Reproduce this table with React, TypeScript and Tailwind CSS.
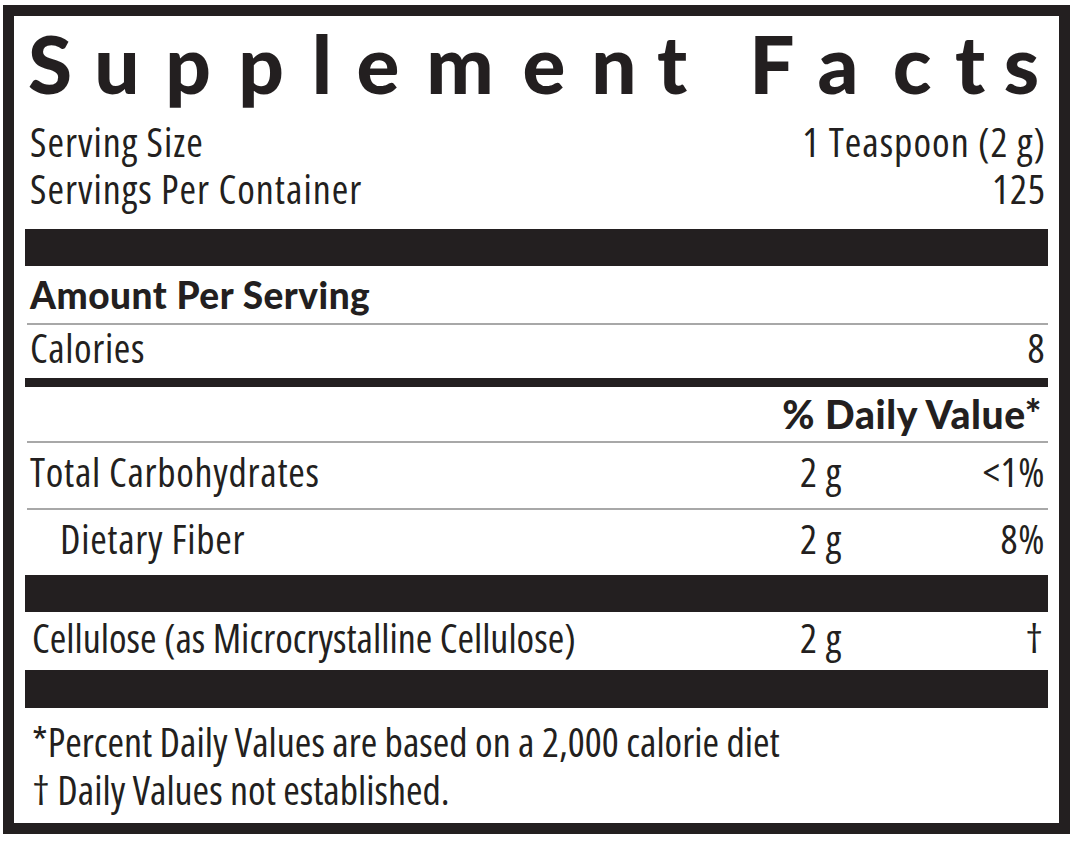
import React from "react";

const body = "font-['Open_Sans',sans-serif] font-stretch-[75%]";
const heavy = "font-['Lato',sans-serif] font-black";

// letter slots for the wide title, each centred on the printed letter
const titleLetters: [string, string][] = [
  ["S", "w-[50px]"],
  ["u", "w-[84px]"],
  ["p", "w-[58px]"],
  ["p", "w-[88px]"],
  ["l", "w-[34px]"],
  ["e", "w-[78px]"],
  ["m", "w-[86px]"],
  ["e", "w-[82px]"],
  ["n", "w-[58px]"],
  ["t", "w-[58px]"],
  [" ", "w-[46px]"],
  ["F", "w-[50px]"],
  ["a", "w-[82px]"],
  ["c", "w-[66px]"],
  ["t", "w-[50px]"],
  ["s", "w-[53px]"],
];

function NutrientRow({ name, amount, dv, indent }: { name: string; amount: string; dv: string; indent?: boolean }) {
  return (
    <div className={`flex items-center h-[65px] pb-[7px] text-[40px] leading-none tracking-[0.7px] ${body}`}>
      <span className={`flex-1 ${indent ? "pl-[35px]" : "pl-[5px]"}`}>{name}</span>
      <span className="w-[145px]">{amount}</span>
      <span className="w-[103px] text-right pr-[3px]">{dv}</span>
    </div>
  );
}

export default function App() {
  return (
    <div className="w-[1080px] h-[842px] bg-white pt-[5px] pl-[3px]">
      <div className="w-[1067px] h-[829px] border-[11px] border-[#231f20] px-[11px] text-[#231f20] flex flex-col">
        {/* Title */}
        <h1 className={`h-[94px] flex text-[80px] leading-[94px] whitespace-pre ${heavy}`}>
          {titleLetters.map(([ch, w], i) => (
            <span key={i} className={`${w} shrink-0 text-center`}>
              {ch}
            </span>
          ))}
        </h1>

        {/* Serving info */}
        <div className={`h-[119px] pt-[8px] text-[40px] leading-none tracking-[1px] ${body}`}>
          <div className="h-[47px] flex items-center justify-between pl-[5px] pr-[2px]">
            <span>Serving Size</span>
            <span>1 Teaspoon (2 g)</span>
          </div>
          <div className="h-[47px] flex items-center justify-between pl-[5px] pr-[2px]">
            <span>Servings Per Container</span>
            <span>125</span>
          </div>
        </div>

        <div className="h-[37px] bg-[#231f20]" />

        <div className={`h-[57px] flex items-center pl-[5px] text-[37px] tracking-[0.5px] ${heavy}`}>Amount Per Serving</div>
        <div className="h-[2px] bg-[#a8a8a8] ml-[2px]" />

        <div className={`h-[53px] flex items-center justify-between pb-[7px] pl-[5px] pr-[3px] text-[40px] leading-none tracking-[0.6px] ${body}`}>
          <span>Calories</span>
          <span>8</span>
        </div>
        <div className="h-[9px] bg-[#231f20]" />

        <div className={`h-[54px] flex items-center justify-end pr-[6px] text-[39px] tracking-[0.6px] ${heavy}`}>% Daily Value*</div>
        <div className="h-[2px] bg-[#a8a8a8] ml-[2px]" />

        <NutrientRow name="Total Carbohydrates" amount="2 g" dv="<1%" />
        <div className="h-[2px] bg-[#a8a8a8] ml-[2px]" />
        <NutrientRow name="Dietary Fiber" amount="2 g" dv="8%" indent />

        <div className="h-[37px] bg-[#231f20]" />
        <div className={`flex items-center h-[58px] pb-[7px] text-[40px] leading-none ${body}`}>
          <span className="flex-1 pl-[7px]">Cellulose (as Microcrystalline Cellulose)</span>
          <span className="w-[145px] tracking-[0.7px]">2 g</span>
          <span className="w-[103px] text-right pr-[5px]">†</span>
        </div>
        <div className="h-[38px] bg-[#231f20]" />

        {/* Footnotes */}
        <div className={`pt-[10px] pl-[7px] text-[40px] leading-none ${body}`}>
          <p className="h-[48px] flex items-center">*Percent Daily Values are based on a 2,000 calorie diet</p>
          <p className="h-[48px] flex items-center">† Daily Values not established.</p>
        </div>
      </div>
    </div>
  );
}
